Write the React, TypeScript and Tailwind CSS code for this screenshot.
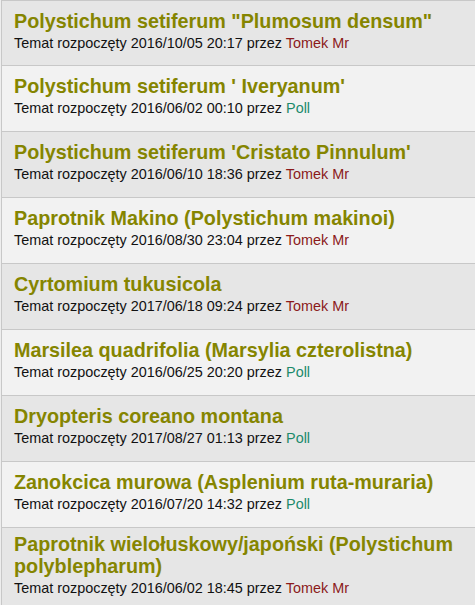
import React from "react";

type Topic = { title: string; date: string; author: string };

const topics: Topic[] = [
  { title: 'Polystichum setiferum "Plumosum densum"', date: "2016/10/05 20:17", author: "Tomek Mr" },
  { title: "Polystichum setiferum ' Iveryanum'", date: "2016/06/02 00:10", author: "Poll" },
  { title: "Polystichum setiferum 'Cristato Pinnulum'", date: "2016/06/10 18:36", author: "Tomek Mr" },
  { title: "Paprotnik Makino (Polystichum makinoi)", date: "2016/08/30 23:04", author: "Tomek Mr" },
  { title: "Cyrtomium tukusicola", date: "2017/06/18 09:24", author: "Tomek Mr" },
  { title: "Marsilea quadrifolia (Marsylia czterolistna)", date: "2016/06/25 20:20", author: "Poll" },
  { title: "Dryopteris coreano montana", date: "2017/08/27 01:13", author: "Poll" },
  { title: "Zanokcica murowa (Asplenium ruta-muraria)", date: "2016/07/20 14:32", author: "Poll" },
  { title: "Paprotnik wielołuskowy/japoński (Polystichum polyblepharum)", date: "2016/06/02 18:45", author: "Tomek Mr" },
];

export default function App() {
  return (
    <div className="w-[475px] h-[605px] overflow-hidden bg-[#eeeeee] pl-px" style={{ fontFamily: '"Liberation Sans", Arial, sans-serif' }}>
      <div className="border-l border-t border-[#c8c8c8]">
        {topics.map((t, i) => (
          <div
            key={i}
            className={`border-b border-[#c8c8c8] pl-3 pr-2 pb-[11px] ${i === 0 ? "min-h-[65px]" : "min-h-[66px]"} ${i === topics.length - 1 ? "pt-[5px]" : "pt-[9px]"} ${i % 2 === 0 ? "bg-[#e6e6e6]" : "bg-[#f2f2f2]"}`}
          >
            <div className="text-[19.75px] leading-[22px] font-bold text-[#858500]">{t.title}</div>
            <div className="text-[14.4px] leading-[22px] text-[#111111]">
              Temat rozpoczęty {t.date} przez{" "}
              <span className={t.author === "Poll" ? "text-[#1b8a6b]" : "text-[#8b1a1a]"}>{t.author}</span>
            </div>
          </div>
        ))}
      </div>
    </div>
  );
}
